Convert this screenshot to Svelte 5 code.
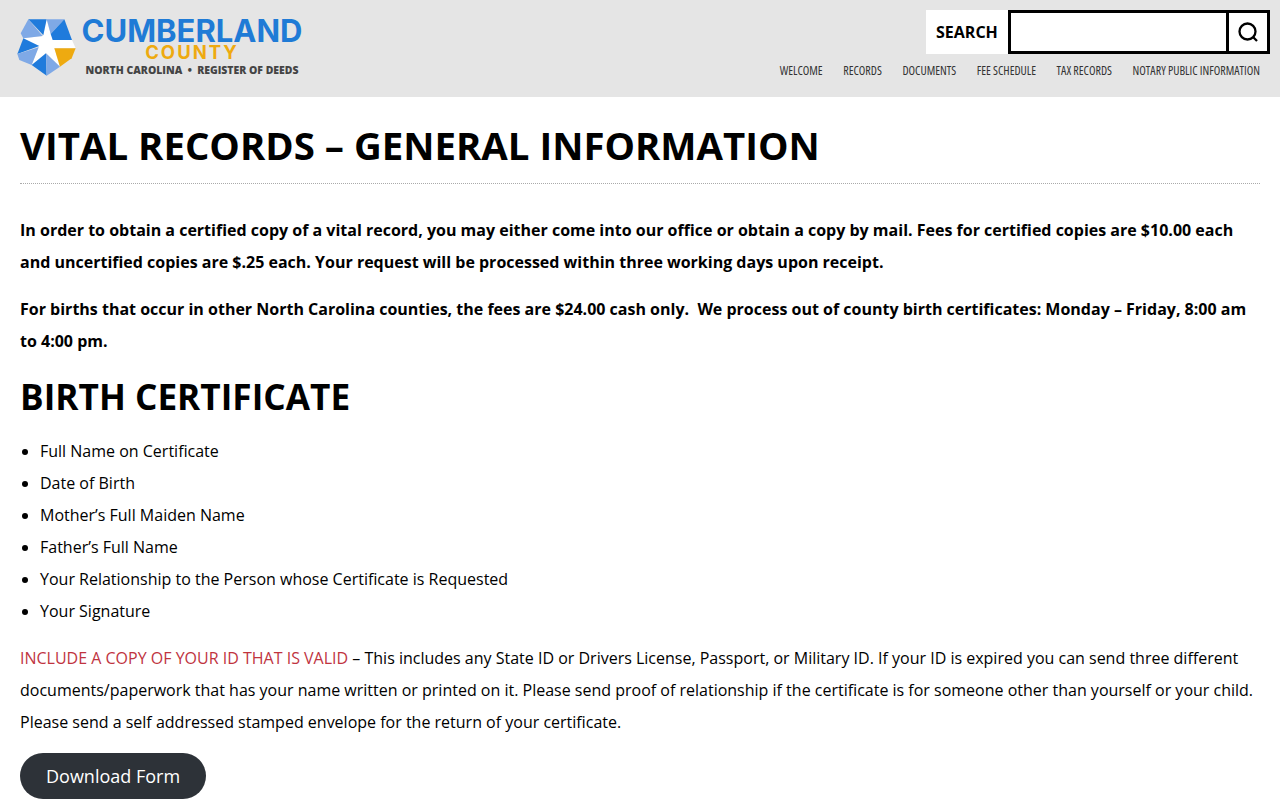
<script>
  const items = ['Full Name on Certificate','Date of Birth','Mother’s Full Maiden Name','Father’s Full Name','Your Relationship to the Person whose Certificate is Requested','Your Signature'];
  const nav = ['WELCOME','RECORDS','DOCUMENTS','FEE SCHEDULE','TAX RECORDS','NOTARY PUBLIC INFORMATION'];
</script>

<header class="top">
  <a class="logo" href="#top">
    <svg class="mark" viewBox="0 0 225 225" aria-hidden="true">
      <polygon fill="#fff" points="110,28 122,72 186,90 197,115 133,115 150,170 108,130 65,165 86,112 40,85 98,78"/>
      <polygon fill="#7fa9e6" points="55,28 98,78 40,85 32,70"/>
      <polygon fill="#1f7bdc" points="55,28 110,28 100,76"/>
      <polygon fill="#7fa9e6" points="110,28 163,28 122,72"/>
      <polygon fill="#1f7bdc" points="163,28 186,90 128,90 122,72"/>
      <polygon fill="#1f7bdc" points="40,85 88,108 22,132"/>
      <polygon fill="#7fa9e6" points="22,132 86,112 65,165 28,150"/>
      <polygon fill="#1f7bdc" points="65,165 108,130 110,197"/>
      <polygon fill="#7fa9e6" points="108,130 150,170 110,197"/>
      <polygon fill="#eeaa10" points="133,115 197,115 185,145 150,170"/>
    </svg>
    <span class="words">
      <span class="w1">CUMBERLAND</span>
      <span class="w2">COUNTY</span>
      <span class="w3">NORTH CAROLINA &nbsp;•&nbsp; REGISTER OF DEEDS</span>
    </span>
  </a>
  <div class="right">
    <form class="search">
      <span class="label">SEARCH</span>
      <span class="box">
        <span class="field"></span>
        <span class="btn">
          <svg viewBox="0 0 24 24" width="24" height="24" fill="none" stroke="#000" stroke-width="2.3" aria-hidden="true"><circle cx="11.5" cy="11.5" r="8"/><path d="M17.3 17.3l3.7 3.7"/></svg>
        </span>
      </span>
    </form>
    <nav class="nav">
      {#each nav as n}<a href="#top">{n}</a>{/each}
    </nav>
  </div>
</header>

<main class="content">
  <h1>VITAL RECORDS – GENERAL INFORMATION</h1>
  <p class="b">In order to obtain a certified copy of a vital record, you may either come into our office or obtain a copy by mail. Fees for certified copies are $10.00 each and uncertified copies are $.25 each. Your request will be processed within three working days upon receipt.</p>
  <p class="b">For births that occur in other North Carolina counties, the fees are $24.00 cash only.&nbsp; We process out of county birth certificates: Monday – Friday, 8:00 am to 4:00 pm.</p>
  <h2>BIRTH CERTIFICATE</h2>
  <ul>
    {#each items as i}<li>{i}</li>{/each}
  </ul>
  <p><span class="red">INCLUDE A COPY OF YOUR ID THAT IS VALID</span> – This includes any State ID or Drivers License, Passport, or Military ID. If your ID is expired you can send three different documents/paperwork that has your name written or printed on it. Please send proof of relationship if the certificate is for someone other than yourself or your child. Please send a self addressed stamped envelope for the return of your certificate.</p>
  <a class="dl" href="#top">Download Form</a>
</main>

<style>
  :global(body) { margin: 0; background: #fff; color: #000; font-family: "Open Sans", sans-serif; font-size: 16px; line-height: 32px; }
  .top { height: 97px; background: #e5e5e5; display: flex; justify-content: space-between; box-sizing: border-box; padding: 10px 10px 0 10px; }
  .logo { display: flex; align-items: flex-start; text-decoration: none; }
  .mark { width: 75px; height: 75px; display: block; flex: none; }
  .words { display: flex; flex-direction: column; align-items: center; width: 218px; margin-left: -2px; padding-top: 8px; }
  .w1 { font-family: Inter, sans-serif; font-weight: 700; font-size: 31px; line-height: 26px; letter-spacing: 0; color: #1f7bd6; white-space: nowrap; }
  .w2 { font-family: Inter, sans-serif; font-weight: 700; font-size: 18.5px; line-height: 16px; letter-spacing: 2px; color: #eeaa10; white-space: nowrap; }
  .w3 { font-family: "Open Sans", sans-serif; font-weight: 800; font-size: 10.45px; line-height: 16px; color: #444; white-space: nowrap; margin-top: 2px; }
  .right { display: flex; flex-direction: column; align-items: flex-end; }
  .search { display: flex; height: 44px; background: #fff; }
  .label { width: 82px; box-sizing: border-box; padding-left: 10px; font-weight: 700; font-size: 16px; line-height: 44px; }
  .box { display: flex; width: 262px; box-sizing: border-box; border: 3px solid #000; }
  .field { flex: 1; }
  .btn { width: 38px; border-left: 3px solid #000; display: flex; align-items: center; justify-content: center; }
  .nav { display: flex; gap: 20.6px; margin: 8px 10px 0 0; }
  .nav a { color: #333; font-size: 12px; line-height: 18px; font-stretch: 75%; text-decoration: none; white-space: nowrap; }
  .content { padding: 0 20px; }
  h1 { margin: 0; padding: 24px 0 13px; font-size: 38.4px; line-height: 49px; font-weight: 700; border-bottom: 1px dotted #aaa; }
  p { margin: 0 0 15px; }
  .b { font-weight: 700; }
  h1 + .b { margin-top: 30px; }
  h2 { margin: 0 0 15px; font-size: 35.2px; line-height: 48px; font-weight: 700; }
  ul { margin: 0 0 15px; padding-left: 20px; }
  .red { color: #c0343f; }
  .dl { display: inline-block; background: #2d3238; color: #fff; padding: 0 26px; height: 46px; line-height: 46px; border-radius: 23px; font-size: 18px; text-decoration: none; }
</style>
